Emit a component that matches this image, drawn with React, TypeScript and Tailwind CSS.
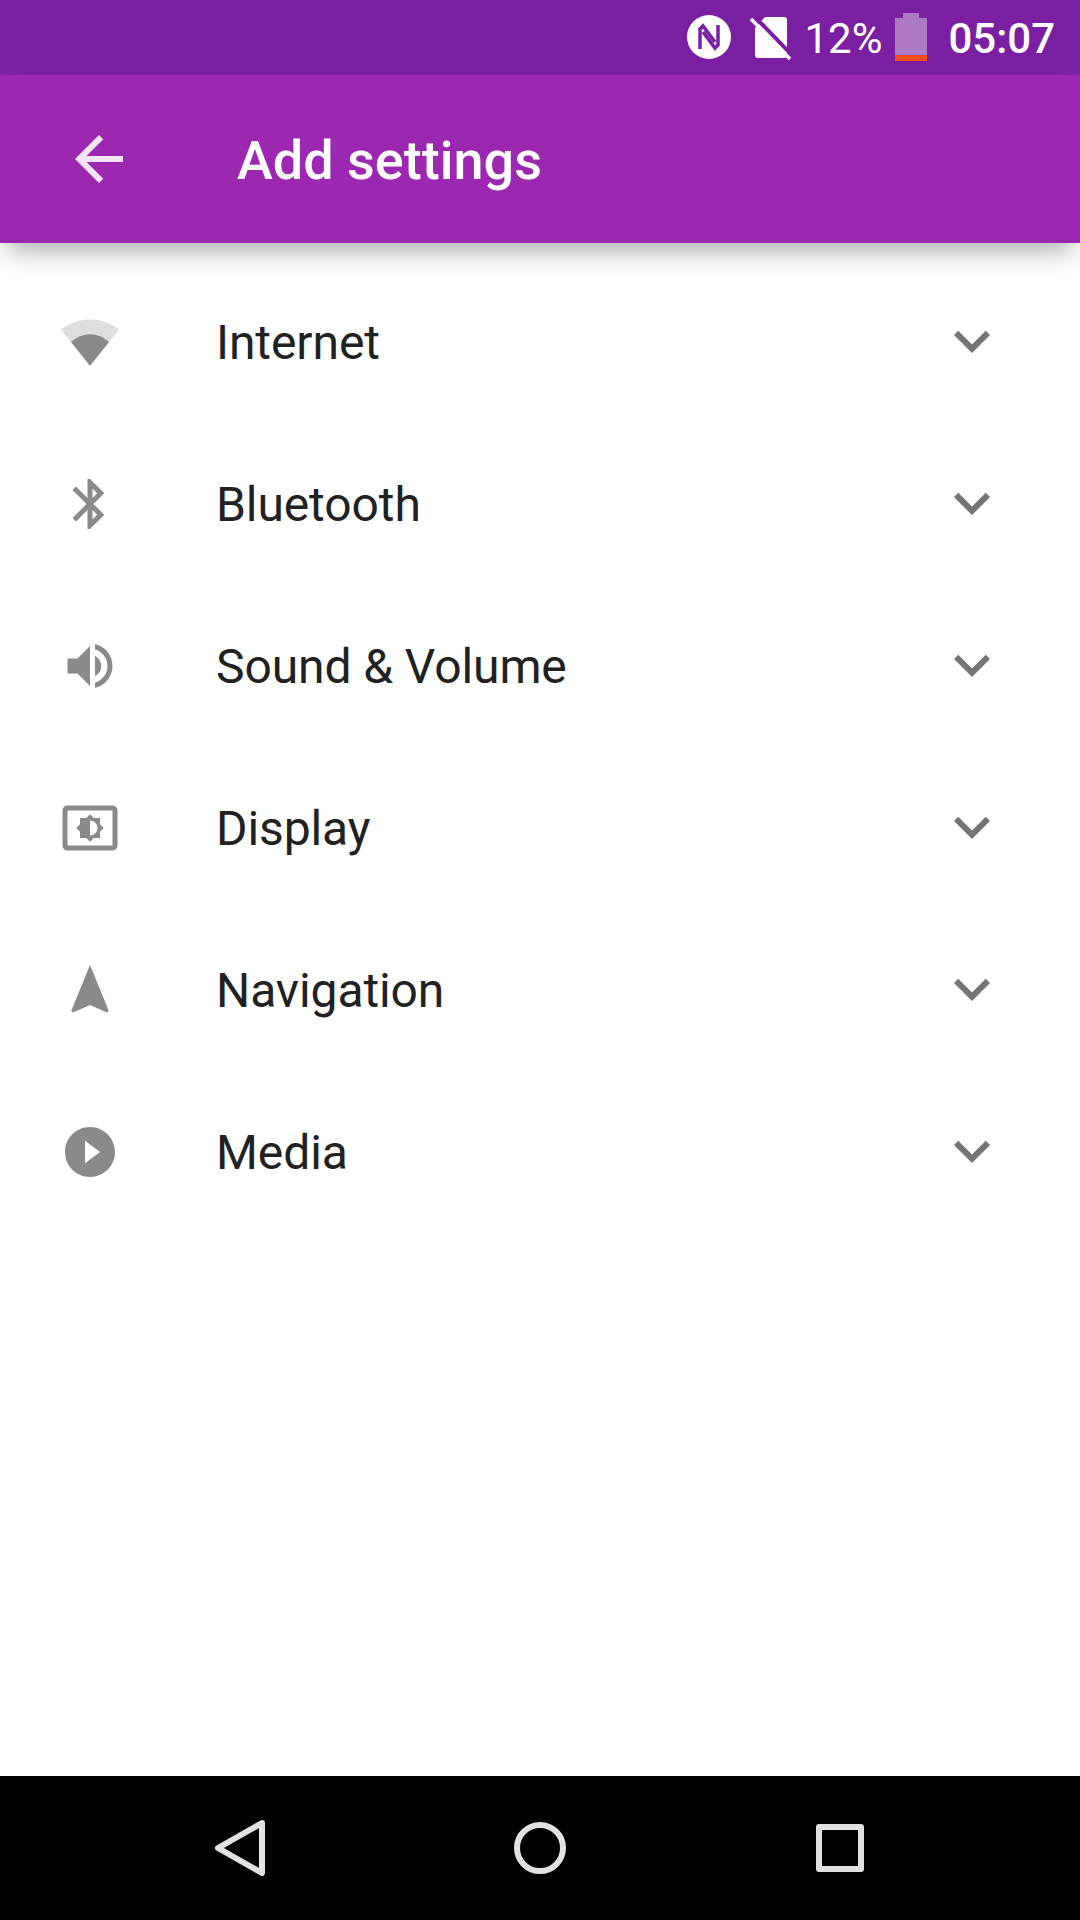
const font = { fontFamily: "Roboto, sans-serif" };

const rows = [
  {
    label: "Internet",
    icon: (
      <>
        <path
          fill="#dedede"
          d="M12.01 21.49L23.64 7c-.45-.34-4.93-4-11.64-4C5.28 3 .81 6.66.36 7l11.63 14.49.01.01.01-.01z"
        />
        <path
          fill="#8a8a8a"
          d="M12 21.5L19.6 12c-.9-.8-3.6-3.1-7.6-3.1S5.300 11.200 4.400 12z"
        />
      </>
    ),
  },
  {
    label: "Bluetooth",
    icon: (
      <path
        fill="#8a8a8a"
        d="M17.71 7.710L12 2h-1v7.590L6.410 5 5 6.410 10.590 12 5 17.590 6.410 19 11 14.410V22h1l5.710-5.710-4.300-4.290 4.300-4.290zM13 5.830l1.880 1.880L13 9.590V5.830zm1.880 10.460L13 18.170v-3.760l1.880 1.880z"
      />
    ),
  },
  {
    label: "Sound & Volume",
    icon: (
      <path
        fill="#8a8a8a"
        d="M3 9v6h4l5 5V4L7 9H3zm13.500 3c0-1.770-1.020-3.290-2.500-4.030v8.050c1.480-.73 2.500-2.250 2.500-4.020zM14 3.230v2.060c2.890.86 5 3.540 5 6.710s-2.110 5.850-5 6.710v2.060c4.010-.91 7-4.490 7-8.770s-2.990-7.860-7-8.770z"
      />
    ),
  },
  {
    label: "Display",
    icon: (
      <path
        fill="#8a8a8a"
        d="M21 3H3c-1.110 0-2 .89-2 2v14c0 1.110.89 2 2 2h18c1.110 0 2-.89 2-2V5c0-1.110-.89-2-2-2zm0 16.020H3V4.980h18v14.040zM8 16h2.500l1.500 1.500 1.500-1.500H16v-2.500l1.500-1.500-1.500-1.500V8h-2.500L12 6.500 10.500 8H8v2.500L6.500 12 8 13.500V16zm4-7c1.660 0 3 1.340 3 3s-1.340 3-3 3V9z"
      />
    ),
  },
  {
    label: "Navigation",
    icon: (
      <path
        fill="#8a8a8a"
        d="M12 2L4.500 20.290l.71.71L12 18l6.790 3 .71-.71z"
      />
    ),
  },
  {
    label: "Media",
    icon: (
      <path
        fill="#8a8a8a"
        d="M12 2C6.480 2 2 6.480 2 12s4.480 10 10 10 10-4.480 10-10S17.520 2 12 2zm-2 14.500v-9l6 4.500-6 4.500z"
      />
    ),
  },
];

const SettingRow = ({ label, icon }: { label: string; icon: React.ReactNode }) => (
  <div className="flex h-[162px] items-center">
    <svg viewBox="0 0 24 24" className="ml-[60px] h-[60px] w-[60px] -translate-y-px">
      {icon}
    </svg>
    <span className="ml-[96px] flex-1 text-[48px] tracking-[-0.1px] text-[#212121]">{label}</span>
    <svg viewBox="0 0 24 24" className="mr-[72px] h-[72px] w-[72px] -translate-y-[2px]">
      <path
        fill="#757575"
        d="M7.410 8.590L12 13.170l4.590-4.580L18 10l-6 6-6-6 1.410-1.410z"
      />
    </svg>
  </div>
);

export default function App() {
  return (
    <div className="flex h-[1920px] w-[1080px] flex-col bg-white" style={font}>
      <div className="flex h-[75px] items-center justify-end bg-[#7b1fa2] text-[42px] text-white">
        <svg viewBox="0 0 44 44" className="h-[44px] w-[44px] -translate-y-px">
          <circle cx="22" cy="22" r="22" fill="#fff" />
          <path
            d="M13 34V14l3-3 12 16M31 10v20l-3 3L16 17"
            fill="none"
            stroke="#7b1fa2"
            strokeWidth="3.500"
          />
        </svg>
        <svg viewBox="0 0 42 44" className="ml-[18px] h-[44px] w-[42px]">
          <path fill="#fff" d="M16 1h19a3 3 0 0 1 3 3v35a3 3 0 0 1-3 3H9a3 3 0 0 1-3-3V12z" />
          <path stroke="#7b1fa2" strokeWidth="4" d="M5 0L42 38" />
          <path stroke="#fff" strokeWidth="3.500" d="M2 3L41 43" />
        </svg>
        <span className="ml-[13px] translate-y-px">12%</span>
        <div className="ml-[13px] flex h-[48px] w-[32px] -translate-y-px flex-col items-center">
          <div className="h-[5px] w-[16px] bg-[#af7ac5]" />
          <div className="w-full flex-1 bg-[#af7ac5]" />
          <div className="h-[6px] w-full bg-[#f4511e]" />
        </div>
        <span className="ml-[21px] mr-[25px] translate-y-px font-medium">05:07</span>
      </div>

      <div className="relative flex h-[168px] items-center bg-[#9c27b0] shadow-[0_16px_24px_-8px_rgba(0,0,0,0.32)]">
        <svg viewBox="0 0 24 24" className="ml-[63px] h-[72px] w-[72px]">
          <path
            fill="#f3e5f5"
            d="M20 11H7.830l5.590-5.590L12 4l-8 8 8 8 1.410-1.410L7.830 13H20v-2z"
          />
        </svg>
        <span className="ml-[102px] translate-y-px text-[54px] font-medium text-white">
          Add settings
        </span>
      </div>

      <div className="flex-1 pt-[19px]">
        {rows.map((row) => (
          <SettingRow key={row.label} label={row.label} icon={row.icon} />
        ))}
      </div>

      <div className="flex h-[144px] items-center bg-black">
        <svg viewBox="0 0 60 64" className="ml-[210px] h-[64px] w-[60px]">
          <path
            d="M52 7L8 32l44 25z"
            fill="none"
            stroke="#e2e2e2"
            strokeWidth="6"
            strokeLinejoin="round"
          />
        </svg>
        <div className="ml-[244px] h-[52px] w-[52px] rounded-full border-[6px] border-[#e2e2e2]" />
        <div className="ml-[250px] h-[48px] w-[48px] rounded-[3px] border-[6px] border-[#e2e2e2]" />
      </div>
    </div>
  );
}
